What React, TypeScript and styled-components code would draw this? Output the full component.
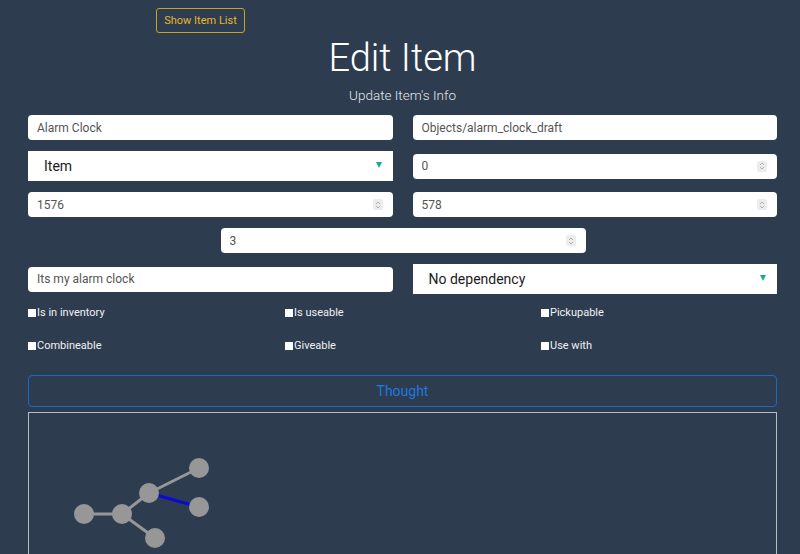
import React from 'react';
import styled, { createGlobalStyle } from 'styled-components';

const GlobalStyle = createGlobalStyle`
  body {
    margin: 0;
    background-color: #2d3c4f;
    font-family: Roboto, "Liberation Sans", sans-serif;
  }
`;

type Node = { id: string; x: number; y: number };
type Edge = { from: string; to: string; active?: boolean };

const nodes: Node[] = [
  { id: 'a', x: 55, y: 101 },
  { id: 'b', x: 93, y: 101 },
  { id: 'c', x: 120, y: 80 },
  { id: 'd', x: 126, y: 125 },
  { id: 'e', x: 170, y: 55 },
  { id: 'f', x: 170, y: 94 },
];

const edges: Edge[] = [
  { from: 'a', to: 'b' },
  { from: 'b', to: 'c' },
  { from: 'b', to: 'd' },
  { from: 'c', to: 'e' },
  { from: 'c', to: 'f', active: true },
];

const flags = [
  'Is in inventory',
  'Is useable',
  'Pickupable',
  'Combineable',
  'Giveable',
  'Use with',
];

const App = () => {
  const find = (id: string) => nodes.find((n) => n.id === id)!;

  return (
    <Page>
      <GlobalStyle />
      <TopBar>
        <OutlineButton>Show Item List</OutlineButton>
      </TopBar>
      <Title>Edit Item</Title>
      <Subtitle>Update Item's Info</Subtitle>

      <Form>
        <Row>
          <TextInput defaultValue="Alarm Clock" />
          <TextInput defaultValue="Objects/alarm_clock_draft" />
        </Row>
        <Row>
          <SelectBox label="Item" />
          <NumberInput value="0" />
        </Row>
        <Row>
          <NumberInput value="1576" />
          <NumberInput value="578" />
        </Row>
        <CenterRow>
          <NumberInput value="3" />
        </CenterRow>
        <Row>
          <TextInput defaultValue="Its my alarm clock" />
          <SelectBox label="No dependency" />
        </Row>
      </Form>

      <Checks>
        {flags.map((f) => (
          <CheckLabel key={f}>
            <Box />
            {f}
          </CheckLabel>
        ))}
      </Checks>

      <ThoughtButton>Thought</ThoughtButton>

      <GraphPanel>
        <svg width="300" height="160">
          {edges.map((e) => {
            const a = find(e.from);
            const b = find(e.to);
            return (
              <line
                key={e.from + e.to}
                x1={a.x}
                y1={a.y}
                x2={b.x}
                y2={b.y}
                stroke={e.active ? '#0a0ad8' : '#979797'}
                strokeWidth={3}
              />
            );
          })}
          {nodes.map((n) => (
            <circle key={n.id} cx={n.x} cy={n.y} r={10} fill="#979797" />
          ))}
        </svg>
      </GraphPanel>
    </Page>
  );
};

const SelectBox = ({ label }: { label: string }) => (
  <SelectWrap>
    <SelectText>{label}</SelectText>
    <Arrow />
  </SelectWrap>
);

const NumberInput = ({ value }: { value: string }) => (
  <NumberWrap>
    <TextInput type="number" defaultValue={value} />
    <Spinner>
      <svg width="6" height="8" viewBox="0 0 6 8">
        <path d="M1 3 L3 1 L5 3 M1 5 L3 7 L5 5" fill="none" stroke="#a9a9a9" strokeWidth="0.9" />
      </svg>
    </Spinner>
  </NumberWrap>
);

const Page = styled.div`
  padding: 0 23px 0 28px;
  color: white;
`;

const TopBar = styled.div`
  padding-top: 8px;
  padding-left: 128px;
`;

const OutlineButton = styled.button`
  height: 25px;
  width: 89px;
  padding: 0;
  border: 1px solid #c9a227;
  border-radius: 3px;
  background: transparent;
  color: #e6b82e;
  font-family: Roboto, "Liberation Sans", sans-serif;
  font-size: 11px;
`;

const Title = styled.h1`
  margin: 2px 0 0;
  text-align: center;
  font-size: 38px;
  font-weight: 300;
  line-height: 46px;
`;

const Subtitle = styled.p`
  margin: 5px 0 0;
  text-align: center;
  font-size: 13.5px;
  font-weight: 300;
  color: #e4e7ea;
  line-height: 18px;
`;

const Form = styled.div`
  margin-top: 11px;
  display: flex;
  flex-direction: column;
  gap: 11px;
`;

const Row = styled.div`
  display: grid;
  grid-template-columns: 1fr 1fr;
  column-gap: 20px;
  align-items: center;
  min-height: 25px;
`;

const CenterRow = styled.div`
  display: flex;
  justify-content: center;
  padding-left: 1px;

  & > div {
    width: 365px;
  }
`;

const NumberWrap = styled.div`
  position: relative;
  width: 100%;
`;

const Spinner = styled.span`
  position: absolute;
  right: 10px;
  top: 7px;
  width: 10px;
  height: 11px;
  border-radius: 2px;
  background: #ececec;
  display: flex;
  align-items: center;
  justify-content: center;
`;

const TextInput = styled.input`
  display: block;
  box-sizing: border-box;
  width: 100%;
  height: 25px;
  border: none;
  border-radius: 4px;
  background: white;
  padding: 0 8px 0 9px;
  font-family: Roboto, "Liberation Sans", sans-serif;
  font-size: 12px;
  color: #555;
  outline: none;

  &::-webkit-inner-spin-button,
  &::-webkit-outer-spin-button {
    -webkit-appearance: none;
    margin: 0;
  }
`;

const SelectWrap = styled.div`
  position: relative;
  box-sizing: border-box;
  height: 30px;
  background: white;
  display: flex;
  align-items: center;
  padding-left: 16px;
`;

const SelectText = styled.span`
  font-size: 14px;
  color: #1b1b1b;
`;

const Arrow = styled.span`
  position: absolute;
  right: 11px;
  top: 11px;
  width: 0;
  height: 0;
  border-left: 3.5px solid transparent;
  border-right: 3.5px solid transparent;
  border-top: 6px solid #1aa89a;
`;

const Checks = styled.div`
  margin-top: 12px;
  display: grid;
  grid-template-columns: 257px 256px 1fr;
  row-gap: 19px;
`;

const CheckLabel = styled.label`
  display: flex;
  align-items: center;
  font-size: 11px;
  line-height: 14px;
  color: #f2f2f2;
`;

const Box = styled.span`
  width: 8px;
  height: 8px;
  background: white;
  margin-right: 1px;
`;

const ThoughtButton = styled.button`
  display: block;
  box-sizing: border-box;
  width: 100%;
  height: 32px;
  margin-top: 22px;
  border: 1px solid #1c68c9;
  border-radius: 4px;
  background: transparent;
  color: #1f78e0;
  font-family: Roboto, "Liberation Sans", sans-serif;
  font-size: 14px;
`;

const GraphPanel = styled.div`
  margin-top: 5px;
  height: 200px;
  border: 1px solid #b6bcc4;
`;

export default App;
